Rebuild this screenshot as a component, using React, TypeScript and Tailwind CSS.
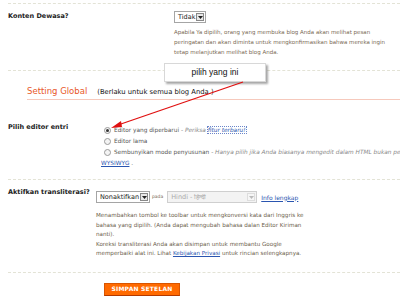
const dotted = "border-t border-dashed border-[#e3e3d6]";

function Select({ label, disabled, width }: { label: string; disabled?: boolean; width: string }) {
  return (
    <div
      className={`flex items-center h-[12px] border shrink-0 ${width} ${
        disabled ? "border-[#cfcfcf] bg-[#f3f3f3] text-[#aaa]" : "border-[#a5a5a5] bg-white text-[#222]"
      }`}
    >
      <span className="flex-1 pl-[3px] text-[6.5px] leading-none whitespace-nowrap overflow-hidden">{label}</span>
      <span
        className={`flex items-center justify-center w-[8px] h-[8px] mr-[1px] border ${
          disabled ? "border-[#ddd] bg-[#f6f6f6]" : "border-[#888] bg-[#e8e8e8]"
        }`}
      >
        <svg width="5" height="3" viewBox="0 0 5 3">
          <polygon points="0,0 5,0 2.5,3" fill={disabled ? "#bbb" : "#222"} />
        </svg>
      </span>
    </div>
  );
}

function Radio({ checked }: { checked?: boolean }) {
  return (
    <span className="inline-flex items-center justify-center w-[7px] h-[7px] rounded-full border border-[#9a9a9a] bg-[#f4f4f4] mr-[3px] shrink-0">
      {checked && <span className="w-[3px] h-[3px] rounded-full bg-[#333]" />}
    </span>
  );
}

export default function App() {
  return (
    <div
      className="relative w-[400px] h-[303px] bg-white overflow-hidden text-[#222]"
      style={{ fontFamily: '"DejaVu Sans", Verdana, sans-serif' }}
    >
      <div className={`ml-[8px] mt-[3px] ${dotted}`} />

      {/* Konten Dewasa */}
      <div className="flex pt-[7px] pb-[13px]">
        <div className="w-[174px] shrink-0 pl-[8px] text-[6.5px] font-bold leading-[11px]">Konten Dewasa?</div>
        <div className="flex-1 min-w-0">
          <Select label="Tidak" width="w-[32px]" />
          <div className="mt-[4px] text-[5.5px] leading-[10px] text-[#7a6a55] whitespace-nowrap">
            <div>Apabila Ya dipilih, orang yang membuka blog Anda akan melihat pesan</div>
            <div>peringatan dan akan diminta untuk mengkonfirmasikan bahwa mereka ingin</div>
            <div>tetap melanjutkan melihat blog Anda.</div>
          </div>
        </div>
      </div>
      <div className={`ml-[8px] ${dotted}`} />

      {/* Setting Global */}
      <div className="ml-[27px] mt-[14px] flex items-baseline gap-[10px] border-b border-[#f6c9bc] pb-[1px]">
        <span className="text-[8.5px] leading-[12px] text-[#e8572a]">Setting Global</span>
        <span className="text-[6.8px] leading-[12px] text-[#111]">(Berlaku untuk semua blog Anda.)</span>
      </div>

      {/* Pilih editor entri */}
      <div className="flex pt-[22px] pb-[10px]">
        <div className="w-[101px] shrink-0 pl-[8px] text-[6.5px] font-bold leading-[10px] whitespace-nowrap">
          Pilih editor entri
        </div>
        <div className="flex-1 min-w-0 overflow-hidden pt-[3px] text-[5.8px] leading-[11px] text-[#555] whitespace-nowrap">
          <div className="flex items-center pl-[3px]">
            <Radio checked />
            <span>Editor yang diperbarui</span>
            <span className="italic text-[#888] ml-[2px]">
              - Periksa{" "}
              <span className="text-[#2a55b0] outline outline-1 outline-dotted outline-[#6b86c9]">fitur terbaru!</span>
            </span>
          </div>
          <div className="flex items-center pl-[3px]">
            <Radio />
            <span>Editor lama</span>
          </div>
          <div className="flex items-center pl-[3px]">
            <Radio />
            <span>Sembunyikan mode penyusunan</span>
            <span className="italic text-[#888] ml-[2px]">- Hanya pilih jika Anda biasanya mengedit dalam HTML bukan pen</span>
          </div>
          <div>
            <span className="text-[#2a55b0] underline">WYSIWYG</span> .
          </div>
        </div>
      </div>
      <div className={`ml-[8px] ${dotted}`} />

      {/* Aktifkan transliterasi */}
      <div className="flex pt-[7px] pb-[13px]">
        <div className="w-[96px] shrink-0 pl-[8px] text-[6.5px] font-bold leading-[10px] whitespace-nowrap">
          Aktifkan transliterasi?
        </div>
        <div className="flex-1 min-w-0 pt-[4px]">
          <div className="flex items-center">
            <Select label="Nonaktifkan" width="w-[54px]" />
            <span className="ml-[2px] mr-[4px] text-[4.5px] text-[#7a6a55]">pada</span>
            <Select label="Hindi - हिन्दी" disabled width="w-[90px]" />
            <span className="ml-[4px] text-[6px] text-[#2a55b0] underline whitespace-nowrap">Info lengkap</span>
          </div>
          <div className="mt-[8px] text-[5.6px] leading-[9.5px] text-[#6b5d4b] whitespace-nowrap">
            <div>Menambahkan tombol ke toolbar untuk mengkonversi kata dari Inggris ke</div>
            <div>bahasa yang dipilih. (Anda dapat mengubah bahasa dalan Editor Kiriman</div>
            <div>nanti).</div>
            <div>Koreksi transliterasi Anda akan disimpan untuk membantu Google</div>
            <div>
              memperbaiki alat ini. Lihat <span className="text-[#2a55b0] underline">Kebijakan Privasi</span> untuk rincian
              selengkapnya.
            </div>
          </div>
        </div>
      </div>
      <div className={`ml-[8px] ${dotted}`} />

      <div className="flex pl-[104px] pt-[10px]">
        <button className="h-[13px] w-[76px] bg-[#ff6a00] border border-[#d95500] border-b-[#b33a00] text-white text-[6px] font-bold leading-none tracking-[0.2px]">
          SIMPAN SETELAN
        </button>
      </div>

      {/* Callout */}
      <div
        className="absolute left-[164px] top-[63px] w-[102px] h-[19px] bg-white border border-[#d8d8d8] shadow-[2px_2px_2px_rgba(0,0,0,0.35)] flex items-center justify-center text-[8.5px] text-[#111]"
        style={{ fontFamily: '"Liberation Sans", Arial, sans-serif' }}
      >
        pilih yang ini
      </div>

      {/* Red arrow */}
      <svg className="absolute left-0 top-0 pointer-events-none" width="400" height="303">
        <line x1="243" y1="82" x2="118" y2="125" stroke="#e01010" strokeWidth="1.3" />
        <polygon points="111,128 121,121 122,127" fill="#e01010" />
      </svg>
    </div>
  );
}
